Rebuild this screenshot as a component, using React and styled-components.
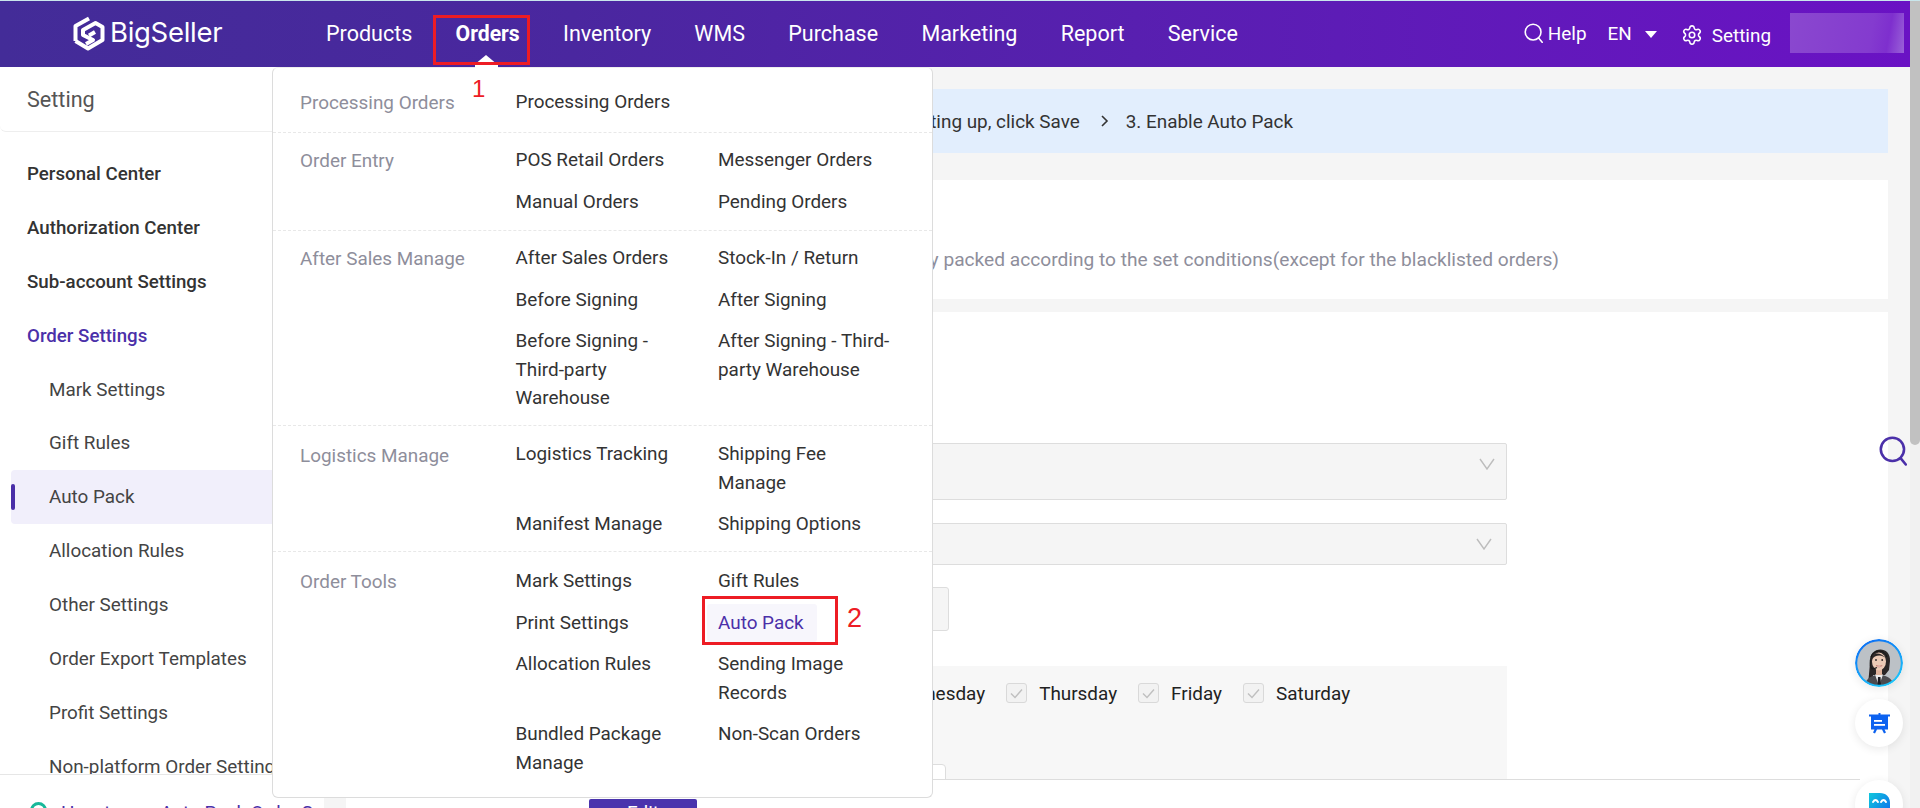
import React from "react";
import styled, { createGlobalStyle } from "styled-components";
import { Settings } from "lucide-react";

const Global = createGlobalStyle`
  html, body { margin: 0; padding: 0; background: #f5f5f5; overflow: hidden; }
  * { box-sizing: border-box; }
  body { font-family: Roboto, "Liberation Sans", sans-serif; font-size: 18.9px; color: #333; }
`;

const Page = styled.div`
  position: relative; width: 1920px; height: 808px; overflow: hidden;
  display: flex; flex-direction: column;
`;
const TopStrip = styled.div`height: 1px; flex: none; background: #c9e6ec;`;
const Shell = styled.div`flex: 1; min-height: 0; display: flex;`;
const Column = styled.div`flex: 1; min-width: 0; display: flex; flex-direction: column;`;

const Header = styled.header`
  height: 66px; flex: none; display: flex; align-items: center; padding: 0 6px 2px 0;
  background: linear-gradient(90deg, #432c98 0%, #4a279f 30%, #5d1cb6 70%, #6a12c4 100%);
  color: #fff;
`;
const Brand = styled.div`width: 326px; flex: none; display: flex; align-items: center; gap: 5px; padding-left: 73px;`;
const BrandName = styled.span`font-family: Inter, sans-serif; font-size: 27.5px; font-weight: 400; letter-spacing: -0.3px; line-height: 1;`;
const Nav = styled.nav`display: flex; gap: 43.3px; align-items: center;`;
const NavItem = styled.a`font-size: ${p => (p.$on ? 21.2 : 21.5)}px; font-weight: ${p => (p.$on ? 700 : 400)}; color: #fff; white-space: nowrap;`;
const Tools = styled.div`margin-left: auto; display: flex; align-items: center; font-size: 18.9px;`;
const Help = styled.div`display: flex; align-items: center; gap: 5px; margin-right: 21px;`;
const Lang = styled.div`display: flex; align-items: center; gap: 13px; margin-right: 24px;`;
const Caret = styled.i`width: 0; height: 0; border: 6px solid transparent; border-top: 7px solid #fff; border-bottom: 0; margin-top: 2px;`;
const SettingLink = styled.div`display: flex; align-items: center; gap: 9px; margin: 4px 19px 0 0;`;
const UserBlur = styled.div`
  width: 114px; height: 40px;
  background: linear-gradient(100deg, #8a48cf 0%, #843bcf 70%, #7e2fce 85%, #9a62d8 100%);
`;

const Body = styled.div`flex: 1; min-height: 0; display: flex;`;
const Sidebar = styled.aside`width: 324px; flex: none; background: #fff; display: flex; flex-direction: column; overflow: hidden;`;
const SideTitle = styled.div`
  height: 65px; flex: none; padding: 1px 27px 0; display: flex; align-items: center;
  font-size: 21.6px; color: #555; border-bottom: 1px solid #eee; border-bottom-left-radius: 6px;
`;
const SideList = styled.div`flex: 1; min-height: 0; overflow: hidden; padding: 15px 0 0 11px;`;
const SideRow = styled.div`
  position: relative; height: 53.9px; display: flex; align-items: center; white-space: nowrap;
  padding-left: ${p => (p.$sub ? 38 : 16)}px;
  font-size: ${p => (p.$group ? 18.7 : 18.85)}px;
  font-weight: ${p => (p.$group ? 500 : 400)};
  color: ${p => (p.$accent ? "#4b30a9" : p.$group ? "#333" : "#444")};
  background: ${p => (p.$active ? "#f1effb" : "transparent")};
  border-radius: 4px;
`;
const Marker = styled.i`position: absolute; left: 0; top: 14px; width: 4px; height: 26px; background: #4a2fa8; border-radius: 2px;`;
const SideFoot = styled.div`
  height: 34px; flex: none; border-top: 1px solid #e6e6e6; padding: 26px 0 0 30px;
  display: flex; gap: 14px; color: #4b30a9; white-space: nowrap; line-height: 24px;
`;
const FootDot = styled.i`width: 17px; height: 17px; flex: none; border: 3px solid #18b89a; border-radius: 50%; margin-top: 1px;`;

const Main = styled.main`flex: 1; min-width: 0; padding: 22px 22px 0; display: flex; flex-direction: column; background: #f5f5f5;`;
const Banner = styled.div`
  height: 64px; flex: none; background: #e2eefd; display: flex; align-items: center; justify-content: flex-end;
  padding-right: 595px; gap: 16px; color: #333; white-space: nowrap;
`;
const StepArrow = styled.svg`margin-left: 4px;`;
const InfoCard = styled.section`
  height: 119px; flex: none; margin-top: 27px; background: #fff; position: relative;
  display: flex; flex-direction: column; justify-content: flex-end; align-items: flex-end;
  padding: 0 329px 24px 0;
`;
const Desc = styled.div`color: #8e8e9b; white-space: nowrap; line-height: 30px; font-size: 19.15px;`;
const CardTitle = styled.div`position: absolute; left: 24px; top: 20px; font-size: 21.6px; font-weight: 500;`;
const FormCard = styled.section`flex: 1; min-height: 0; margin-top: 13px; background: #fff; padding: 131px 0 0 124px; overflow: hidden;`;
const FormCol = styled.div`width: 1037px; height: 100%; display: flex; flex-direction: column;`;
const Select = styled.div`
  height: ${p => p.$h}px; margin-top: ${p => p.$gap || 0}px; flex: none;
  background: #f5f5f5; border: 1px solid #ddd; border-radius: 2px;
  display: flex; justify-content: flex-end; align-items: flex-start;
  padding: ${p => p.$pt}px ${p => p.$pr}px 0 0;
`;
const SmallButton = styled.div`
  width: 479px; height: 44px; margin-top: 22px; flex: none; background: #f5f5f5; border: 1px solid #ddd; border-radius: 3px;
  display: flex; align-items: center; justify-content: flex-end; padding-right: 10px;
`;
const DaysBox = styled.div`flex: 1; min-height: 0; margin-top: 35px; background: #f7f7f7; padding: 15px 0 0 23.5px; overflow: hidden;`;
const Days = styled.div`display: flex; gap: 21px; align-items: center; height: 24px;`;
const Day = styled.label`display: flex; gap: 12px; align-items: center; color: #222; white-space: nowrap;`;
const Check = styled.span`
  width: 21px; height: 20px; flex: none; background: #f2f2f2; border: 1px solid #d9d9d9; border-radius: 3px;
  display: flex; align-items: center; justify-content: center;
`;
const TimeBox = styled.div`width: 452px; height: 30px; margin-top: 59px; background: #fff; border: 1px solid #ddd; border-radius: 4px;`;
const ActionBar = styled.div`height: 29px; flex: none; background: #fff; overflow: hidden;`;
const ActionInner = styled.div`height: 29px; margin-right: 28px; border-top: 1px solid #ddd; padding: 19px 0 0 243px;`;
const PrimaryBtn = styled.div`
  width: 108px; height: 44px; background: #4a33ad; color: #fff; border-radius: 2px;
  display: flex; justify-content: center; line-height: 28px;
`;

const TrackColumn = styled.div`width: 10px; flex: none; background: #f1f1f1;`;
const Thumb = styled.div`height: 444px; background: #c1c1c1; border-radius: 0 0 5px 5px;`;

const Menu = styled.div`
  position: absolute; left: 272px; top: 67px; width: 661px; background: #fff; z-index: 5;
  border: 1px solid #dcdcdc; border-top-color: #eee; border-radius: 6px; padding-bottom: 6px;
`;
const MenuSection = styled.div`
  display: grid; grid-template-columns: 215.5px 1fr; padding: ${p => p.$pad};
  border-bottom: ${p => (p.$last ? "none" : "1px dashed #e8e8e8")};
`;
const MenuLabel = styled.div`color: #8e8e9b; line-height: 28.5px; padding-top: 8px;`;
const MenuGrid = styled.div`display: grid; grid-template-columns: 202.5px 202.5px; align-items: start;`;
const MenuItem = styled.a`
  display: block; line-height: 28.5px; color: #333;
  width: ${p => (p.$active ? "fit-content" : "175px")};
  padding: ${p => (p.$active ? "5px 13px 5px 11px" : "6.6px 0")};
  margin: ${p => (p.$active ? "1.6px 0 1.6px -11px" : "0")};
  ${p => p.$active && "color: #4b30a9; background: #f7f6fc; border-radius: 3px;"}
`;
const Pointer = styled.i`
  position: absolute; left: 474px; top: 55px; z-index: 6; width: 0; height: 0;
  border: 12px solid transparent; border-bottom: 10px solid #fff; border-top: 0;
`;
const PointerBase = styled.i`position: absolute; left: 475px; top: 64px; z-index: 6; width: 23px; height: 4px; background: #fff;`;
const RedBox = styled.div`
  position: absolute; z-index: 7; border: 3px solid #ed1c24;
  left: ${p => p.$x}px; top: ${p => p.$y}px; width: ${p => p.$w}px; height: ${p => p.$h}px;
`;
const RedNum = styled.span`
  position: absolute; z-index: 7; color: #ed1c24; font-family: "Liberation Sans", sans-serif; line-height: 1;
  left: ${p => p.$x}px; top: ${p => p.$y}px; font-size: ${p => p.$s}px;
`;
const SearchFloat = styled.div`position: absolute; left: 1879px; top: 436px; z-index: 4; display: flex;`;
const Floats = styled.div`position: absolute; left: 1855px; top: 639px; z-index: 4; display: flex; flex-direction: column;`;
const Bubble = styled.div`
  width: 48px; height: 48px; border-radius: 50%; background: #fff; margin-bottom: ${p => p.$mb}px;
  box-shadow: 0 2px 10px rgba(0,0,0,.09); display: flex; align-items: ${p => p.$al || "center"}; justify-content: center;
  overflow: hidden; padding-top: ${p => p.$pt || 0}px;
`;

const LogoMark = () => (
  <svg width="32" height="35" viewBox="0 0 32 35" fill="none" stroke="#fff" strokeWidth="4" strokeLinejoin="round">
    <path d="M16 2.5 L2.5 10 V25" />
    <path d="M2.5 25 L15 32.5 L29.5 24 V11 L22.5 7 L10 14 V19 L20 24 L13 28" />
    <path d="M22 16 L16 19.5" strokeWidth="4" />
  </svg>
);
const SearchIcon = ({ c, s, w = 2 }) => (
  <svg width={s} height={s * 1.08} viewBox="0 0 24 26" fill="none" stroke={c} strokeWidth={w} strokeLinecap="round">
    <circle cx="11.5" cy="11.5" r="10" />
    <path d="M18.5 19 L23 24.5" />
  </svg>
);
const Chevron = () => (
  <svg width="16" height="12" viewBox="0 0 16 12" fill="none" stroke="#bdbdbd" strokeWidth="1.4"><path d="M1 1 L8 11 L15 1" /></svg>
);
const Arrow = () => (
  <StepArrow width="10" height="12" viewBox="0 0 10 12" fill="none" stroke="#333" strokeWidth="1.6"><path d="M2 1 L7 6 L2 11" /></StepArrow>
);
const Tick = () => (
  <svg width="13" height="11" viewBox="0 0 13 11" fill="none" stroke="#bfbfbf" strokeWidth="1.4"><path d="M1 5.5 L5 9.5 L12 1.5" /></svg>
);
const Avatar = () => (
  <svg width="48" height="48" viewBox="0 0 48 48">
    <defs>
      <linearGradient id="ring" x1="0.2" y1="0" x2="0.7" y2="1"><stop offset="0" stopColor="#0a6cf5" /><stop offset="1" stopColor="#1ec8fa" /></linearGradient>
      <clipPath id="circ"><circle cx="24" cy="24" r="21.8" /></clipPath>
      <filter id="soft"><feGaussianBlur stdDeviation="0.35" /></filter>
    </defs>
    <circle cx="24" cy="24" r="24" fill="url(#ring)" />
    <g clipPath="url(#circ)" filter="url(#soft)">
      <rect width="48" height="48" fill="#bcc1c6" />
      <path d="M13 46 L15 24 C13 7 36 6 35 22 L34 31 L30 36 L18 36 L17 46 Z" fill="#2b2526" />
      <path d="M9 48 C11 38 18 36 24 36 C30 36 37 38 40 48 Z" fill="#4c4b50" />
      <path d="M20 35.5 L24 47 L28 35.5 Z" fill="#ececec" />
      <path d="M23 38 H25.5 L26 47 H22.5 Z" fill="#1d1d20" />
      <rect x="21" y="28" width="6" height="8" fill="#dfb39c" />
      <ellipse cx="24" cy="22.5" rx="7" ry="9" fill="#eccab6" />
      <path d="M16.5 21 C17 13 25 12 31.5 20 C28 15.5 20 15 16.5 21 Z" fill="#2b2526" />
      <path d="M21 26.6 Q24 29.6 27.2 26.6 Q24 27.6 21 26.6 Z" fill="#fff" stroke="#b9605a" strokeWidth=".5" />
      <path d="M15.5 21 C14 32 19 30 22 28.5" fill="none" stroke="#1b1b1b" strokeWidth="1.2" />
      <path d="M32 18 A8.5 9 0 0 0 16 18" fill="none" stroke="#141414" strokeWidth="1" />
      <circle cx="21" cy="21" r=".9" fill="#2b2526" /><circle cx="27.2" cy="21" r=".9" fill="#2b2526" />
    </g>
  </svg>
);
const BoardIcon = () => (
  <svg width="21" height="21" viewBox="0 0 21 21">
    <path d="M9.5 0 H11.5 V1.5 H21 V3.5 H19 V16.5 H15.5 L17 19.5 L15 20.5 L13 16.5 H8 L6 20.5 L4 19.5 L5.5 16.5 H2 V3.5 H0 V1.5 H9.5 Z" fill="#0c62f0" />
    <rect x="5" y="7" width="8" height="1.8" fill="#fff" /><rect x="5" y="11" width="11" height="1.8" fill="#fff" />
  </svg>
);
const FaceIcon = () => (
  <svg width="21" height="28" viewBox="0 0 21 28">
    <defs><linearGradient id="fc" x1="0" y1="0" x2="1" y2="1"><stop offset="0" stopColor="#10c8dc" /><stop offset="1" stopColor="#0c62f0" /></linearGradient></defs>
    <path d="M0 0 H11 C17 0 21 4 21 10 V28 H0 Z" fill="url(#fc)" />
    <path d="M4 9 Q6.5 5 9 9 M12 9 Q14.5 5 17 9" fill="none" stroke="#fff" strokeWidth="2" strokeLinecap="round" />
  </svg>
);

const NAV = ["Products", "Orders", "Inventory", "WMS", "Purchase", "Marketing", "Report", "Service"];
const SIDE = [
  { t: "Personal Center", group: 1 }, { t: "Authorization Center", group: 1 }, { t: "Sub-account Settings", group: 1 },
  { t: "Order Settings", group: 1, accent: 1 }, { t: "Mark Settings" }, { t: "Gift Rules" }, { t: "Auto Pack", active: 1 },
  { t: "Allocation Rules" }, { t: "Other Settings" }, { t: "Order Export Templates" }, { t: "Profit Settings" },
  { t: "Non-platform Order Settings" },
];
const MENU = [
  ["Processing Orders", ["Processing Orders"], "13.4px 0 8.9px 27px"],
  ["Order Entry", ["POS Retail Orders", "Messenger Orders", "Manual Orders", "Pending Orders"], "6.4px 0 7.2px 27px"],
  ["After Sales Manage", ["After Sales Orders", "Stock-In / Return", "Before Signing", "After Signing", "Before Signing - Third-party Warehouse", "After Signing - Third-party Warehouse"], "6.4px 0 6px 27px"],
  ["Logistics Manage", ["Logistics Tracking", "Shipping Fee Manage", "Manifest Manage", "Shipping Options"], "7.2px 0 5.4px 27px"],
  ["Order Tools", ["Mark Settings", "Gift Rules", "Print Settings", "Auto Pack", "Allocation Rules", "Sending Image Records", "Bundled Package Manage", "Non-Scan Orders"], "8.4px 0 7px 27px"],
];
const DAYS = ["Sunday", "Monday", "Tuesday", "Wednesday", "Thursday", "Friday", "Saturday"];

export default function App() {
  return (
    <Page>
      <Global />
      <TopStrip />
      <Shell>
        <Column>
          <Header>
            <Brand><LogoMark /><BrandName>BigSeller</BrandName></Brand>
            <Nav>{NAV.map(n => <NavItem key={n} $on={n === "Orders"}>{n}</NavItem>)}</Nav>
            <Tools>
              <Help><SearchIcon c="#fff" s={19} w={2} />Help</Help>
              <Lang>EN<Caret /></Lang>
              <SettingLink><Settings size={22} strokeWidth={1.7} />Setting</SettingLink>
              <UserBlur />
            </Tools>
          </Header>
          <Body>
            <Sidebar>
              <SideTitle>Setting</SideTitle>
              <SideList>
                {SIDE.map(s => (
                  <SideRow key={s.t} $group={s.group} $accent={s.accent} $active={s.active} $sub={!s.group}>
                    {s.active && <Marker />}{s.t}
                  </SideRow>
                ))}
              </SideList>
              <SideFoot><FootDot />How to use Auto Pack Order Settings</SideFoot>
            </Sidebar>
            <Main>
              <Banner>
                <span>1. Select the store</span><Arrow />
                <span>2. After setting up, click Save</span><Arrow />
                <span>3. Enable Auto Pack</span>
              </Banner>
              <InfoCard>
                <CardTitle>Auto Pack</CardTitle>
                <Desc>After enabled, orders will be automatically packed according to the set conditions(except for the blacklisted orders)</Desc>
              </InfoCard>
              <FormCard>
                <FormCol>
                  <Select $h={57} $pt={14} $pr={11}><Chevron /></Select>
                  <Select $h={42} $gap={23} $pt={14} $pr={14}><Chevron /></Select>
                  <SmallButton />
                  <DaysBox>
                    <Days>
                      {DAYS.map(d => <Day key={d}><Check><Tick /></Check>{d}</Day>)}
                    </Days>
                    <TimeBox />
                  </DaysBox>
                </FormCol>
              </FormCard>
              <ActionBar>
                <ActionInner><PrimaryBtn>Edit</PrimaryBtn></ActionInner>
              </ActionBar>
            </Main>
          </Body>
        </Column>
        <TrackColumn><Thumb /></TrackColumn>
      </Shell>

      <Menu>
        {MENU.map(([label, items, pad], i) => (
          <MenuSection key={label} $pad={pad} $last={i === MENU.length - 1}>
            <MenuLabel>{label}</MenuLabel>
            <MenuGrid>
              {items.map(it => <MenuItem key={it} $active={label === "Order Tools" && it === "Auto Pack"}>{it}</MenuItem>)}
            </MenuGrid>
          </MenuSection>
        ))}
      </Menu>
      <Pointer /><PointerBase />
      <RedBox $x={433} $y={15} $w={97} $h={50} />
      <RedBox $x={702} $y={596} $w={136} $h={49} />
      <RedNum $x={472} $y={77} $s={24}>1</RedNum>
      <RedNum $x={847} $y={605} $s={27}>2</RedNum>
      <SearchFloat><SearchIcon c="#4b30a9" s={28} w={2.2} /></SearchFloat>
      <Floats>
        <Bubble $mb={12}><Avatar /></Bubble>
        <Bubble $mb={33}><BoardIcon /></Bubble>
        <Bubble $al="flex-start" $pt={13}><FaceIcon /></Bubble>
      </Floats>
    </Page>
  );
}
